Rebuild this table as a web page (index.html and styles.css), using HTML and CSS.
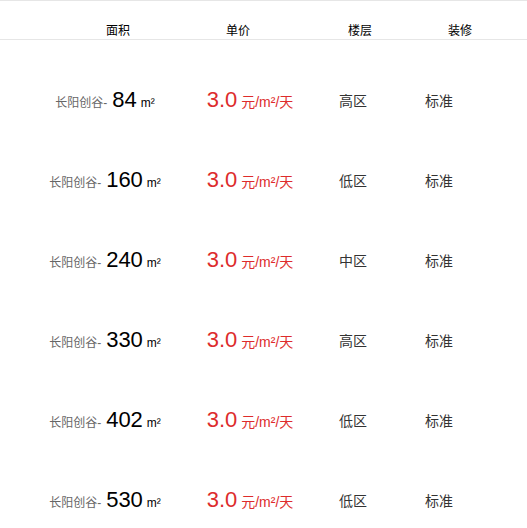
FILE: index.html
```html
<!DOCTYPE html>
<html lang="zh-CN">
<head>
<meta charset="utf-8">
<title>房源列表</title>
<link rel="stylesheet" href="styles.css">
</head>
<body>
<div class="page">
  <div class="thead">
    <div class="th">面积</div>
    <div class="th">单价</div>
    <div class="th">楼层</div>
    <div class="th">装修</div>
  </div>
  <div class="tbody">
    <div class="row">
      <div class="cell area"><span class="name">长阳创谷-</span><span class="num">84</span><span class="unit">m²</span></div>
      <div class="cell price"><span class="pnum">3.0</span><span class="punit">元/m²/天</span></div>
      <div class="cell floor">高区</div>
      <div class="cell deco">标准</div>
    </div>
    <div class="row">
      <div class="cell area"><span class="name">长阳创谷-</span><span class="num">160</span><span class="unit">m²</span></div>
      <div class="cell price"><span class="pnum">3.0</span><span class="punit">元/m²/天</span></div>
      <div class="cell floor">低区</div>
      <div class="cell deco">标准</div>
    </div>
    <div class="row">
      <div class="cell area"><span class="name">长阳创谷-</span><span class="num">240</span><span class="unit">m²</span></div>
      <div class="cell price"><span class="pnum">3.0</span><span class="punit">元/m²/天</span></div>
      <div class="cell floor">中区</div>
      <div class="cell deco">标准</div>
    </div>
    <div class="row">
      <div class="cell area"><span class="name">长阳创谷-</span><span class="num">330</span><span class="unit">m²</span></div>
      <div class="cell price"><span class="pnum">3.0</span><span class="punit">元/m²/天</span></div>
      <div class="cell floor">高区</div>
      <div class="cell deco">标准</div>
    </div>
    <div class="row">
      <div class="cell area"><span class="name">长阳创谷-</span><span class="num">402</span><span class="unit">m²</span></div>
      <div class="cell price"><span class="pnum">3.0</span><span class="punit">元/m²/天</span></div>
      <div class="cell floor">低区</div>
      <div class="cell deco">标准</div>
    </div>
    <div class="row">
      <div class="cell area"><span class="name">长阳创谷-</span><span class="num">530</span><span class="unit">m²</span></div>
      <div class="cell price"><span class="pnum">3.0</span><span class="punit">元/m²/天</span></div>
      <div class="cell floor">低区</div>
      <div class="cell deco">标准</div>
    </div>
  </div>
</div>
</body>
</html>
```

FILE: styles.css
```css
html, body {
  margin: 0;
  padding: 0;
  background: #fff;
}

body {
  font-family: "Liberation Sans", "Noto Sans CJK SC", sans-serif;
  color: #333;
  overflow: hidden;
}

.page {
  width: 527px;
}

.thead {
  display: grid;
  grid-template-columns: 120px 120px 124px 76px;
  padding: 22px 0 0 58px;
  border-top: 1px solid #e6e6e6;
  border-bottom: 1px solid #e6e6e6;
}

.th {
  font-size: 12px;
  line-height: 16px;
  color: #000;
  text-align: center;
}

.tbody {
  padding-top: 20px;
}

.row {
  display: grid;
  grid-template-columns: 190px 100px 106px 66px;
  padding-left: 10px;
  height: 80px;
  align-items: center;
}

.cell {
  display: flex;
  justify-content: center;
  align-items: baseline;
  white-space: nowrap;
}

.name {
  font-size: 12px;
  color: #666;
}

.num {
  font-size: 22px;
  color: #000;
  margin-left: 5px;
}

.unit {
  font-size: 12px;
  color: #000;
  margin-left: 4px;
}

.pnum {
  font-size: 22px;
  color: #dd2c2c;
}

.punit {
  font-size: 14px;
  color: #dd2c2c;
  margin-left: 4px;
}

.floor, .deco {
  font-size: 14px;
  color: #333;
}
```
